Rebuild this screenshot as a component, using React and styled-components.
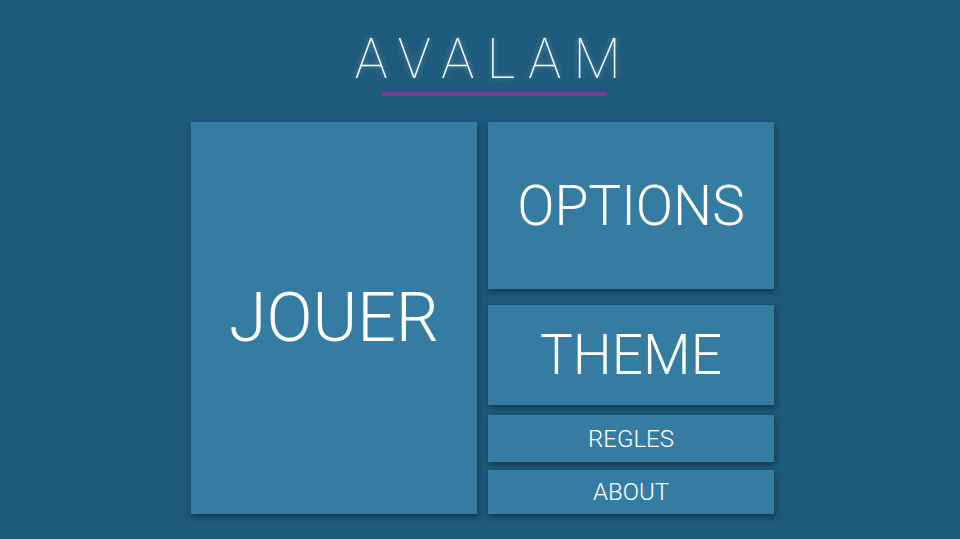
import React from "react";
import styled, { createGlobalStyle } from "styled-components";

const Global = createGlobalStyle`
  html, body { margin: 0; padding: 0; background: #1d5a7b; }
  body { font-family: Roboto, "Liberation Sans", sans-serif; }
`;

const Page = styled.div`
  width: 960px;
  height: 539px;
  background: #1d5a7b;
  display: flex;
  flex-direction: column;
  align-items: center;
  overflow: hidden;
`;

const Header = styled.div`
  display: flex;
  flex-direction: column;
  align-items: center;
  padding-top: 27px;
  margin-left: 15px;
`;

const Title = styled.h1`
  margin: 0;
  font-family: Roboto, sans-serif;
  font-weight: 100;
  font-size: 55px;
  line-height: 64px;
  letter-spacing: 12.6px;
  padding-left: 13px;
  color: #ffffff;
  text-shadow: 0 0 6px rgba(170, 220, 255, 0.55);
`;

const Underline = styled.div`
  width: 225px;
  height: 4px;
  margin-top: 1px;
  margin-left: 14px;
  background: #7a3d96;
`;

const Grid = styled.div`
  margin-top: 26px;
  margin-left: 5px;
  display: grid;
  grid-template-columns: 286px 286px;
  column-gap: 11px;
`;

const Tile = styled.button`
  all: unset;
  box-sizing: border-box;
  display: flex;
  align-items: center;
  justify-content: center;
  background: #357ca3;
  color: #ffffff;
  font-family: Roboto, sans-serif;
  font-weight: 300;
  font-size: ${(p) => p.$size}px;
  height: ${(p) => p.$h}px;
  margin-top: ${(p) => p.$mt || 0}px;
  box-shadow: 1px 3px 6px rgba(0, 0, 0, 0.38);
  cursor: pointer;
`;

const Column = styled.div`
  display: flex;
  flex-direction: column;
`;

export default function App() {
  return (
    <Page>
      <Global />
      <Header>
        <Title>AVALAM</Title>
        <Underline />
      </Header>
      <Grid>
        <Tile $h={392} $size={68}>JOUER</Tile>
        <Column>
          <Tile $h={167} $size={55}>OPTIONS</Tile>
          <Tile $h={100} $mt={16} $size={55}>THEME</Tile>
          <Tile $h={47} $mt={10} $size={24}>REGLES</Tile>
          <Tile $h={44} $mt={8} $size={24}>ABOUT</Tile>
        </Column>
      </Grid>
    </Page>
  );
}
